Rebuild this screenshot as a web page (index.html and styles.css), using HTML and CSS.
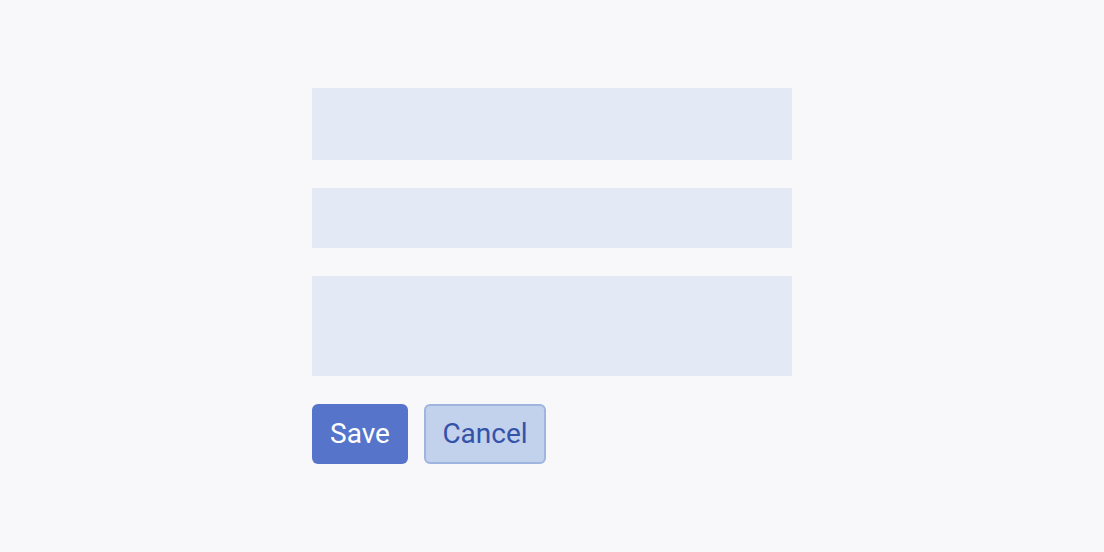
FILE: index.html
```html
<!DOCTYPE html>
<html>
<head>
<meta charset="utf-8">
<link rel="stylesheet" href="styles.css">
</head>
<body>
<div class="form">
  <div class="field field-a"></div>
  <div class="field field-b"></div>
  <div class="field field-c"></div>
  <div class="actions">
    <button class="btn btn-save">Save</button>
    <button class="btn btn-cancel">Cancel</button>
  </div>
</div>
</body>
</html>
```

FILE: styles.css
```css
html, body {
  margin: 0;
  padding: 0;
  background: #f8f8fb;
  width: 1104px;
  height: 552px;
  overflow: hidden;
}
.form {
  width: 480px;
  margin: 0 auto;
  padding-top: 88px;
  display: flex;
  flex-direction: column;
  gap: 28px;
}
.field {
  background: #e3eaf6;
}
.field-a { height: 72px; }
.field-b { height: 60px; }
.field-c { height: 100px; }
.actions {
  display: flex;
  gap: 16px;
}
.btn {
  height: 60px;
  font-family: Roboto, "Liberation Sans", sans-serif;
  font-size: 28px;
  border-radius: 6px;
  padding: 0;
  box-sizing: border-box;
  line-height: 1;
}
.btn-save {
  width: 96px;
  background: #5574ca;
  color: #ffffff;
  border: none;
}
.btn-cancel {
  width: 122px;
  background: #c2d1ec;
  color: #3453a8;
  border: 2px solid #9fb4de;
}
```
